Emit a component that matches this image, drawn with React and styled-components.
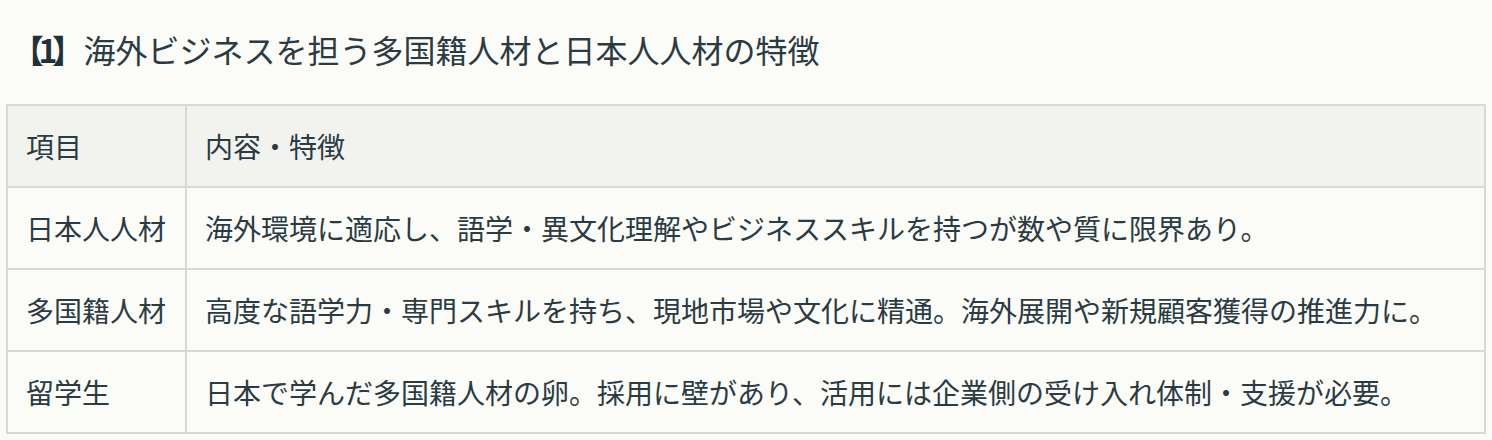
import React from "react";
import styled, { createGlobalStyle } from "styled-components";

const Global = createGlobalStyle`
  html, body {
    margin: 0;
    padding: 0;
    background: #fbfbf8;
  }
  body {
    font-family: "Noto Sans CJK JP", "Noto Sans", sans-serif;
    color: #2a3b43;
  }
`;

const Page = styled.div`
  padding: 25px 6px 0 6px;
  width: 1480px;
`;

const Title = styled.h2`
  margin: 0 0 31px 0;
  font-size: 32px;
  line-height: 48px;
  font-weight: 400;
  color: #2a3b43;
  letter-spacing: 0;
  display: flex;
  align-items: baseline;
`;

const Num = styled.span`
  font-weight: 700;
  color: #1f3239;
  font-feature-settings: "palt";
  letter-spacing: -4.5px;
  padding-left: 21px;
  margin-right: 19px;
`;

const Table = styled.table`
  width: 1480px;
  border-collapse: collapse;
  border: 2px solid #d9d9d3;
  font-size: 28px;
  table-layout: fixed;
`;

const Cell = styled.td`
  border: 2px solid #d9d9d3;
  padding: 20px 18px 20px 18px;
  line-height: 40px;
  height: 40px;
  text-align: left;
  vertical-align: middle;
  white-space: nowrap;
  background: ${(p) => (p.$head ? "#f2f2ee" : "#fbfbf8")};
  font-weight: 400;
  box-sizing: content-box;
`;

const HeadCell = styled(Cell).attrs({ as: "th" })``;

const rows = [
  ["日本人人材", "海外環境に適応し、語学・異文化理解やビジネススキルを持つが数や質に限界あり。"],
  ["多国籍人材", "高度な語学力・専門スキルを持ち、現地市場や文化に精通。海外展開や新規顧客獲得の推進力に。"],
  ["留学生", "日本で学んだ多国籍人材の卵。採用に壁があり、活用には企業側の受け入れ体制・支援が必要。"],
];

export default function App() {
  return (
    <Page>
      <Global />
      <Title>
        <Num>【1】</Num>
        <span>海外ビジネスを担う多国籍人材と日本人人材の特徴</span>
      </Title>
      <Table>
        <colgroup>
          <col style={{ width: "179px" }} />
          <col />
        </colgroup>
        <thead>
          <tr>
            <HeadCell $head>項目</HeadCell>
            <HeadCell $head>内容・特徴</HeadCell>
          </tr>
        </thead>
        <tbody>
          {rows.map(([k, v]) => (
            <tr key={k}>
              <Cell>{k}</Cell>
              <Cell>{v}</Cell>
            </tr>
          ))}
        </tbody>
      </Table>
    </Page>
  );
}
